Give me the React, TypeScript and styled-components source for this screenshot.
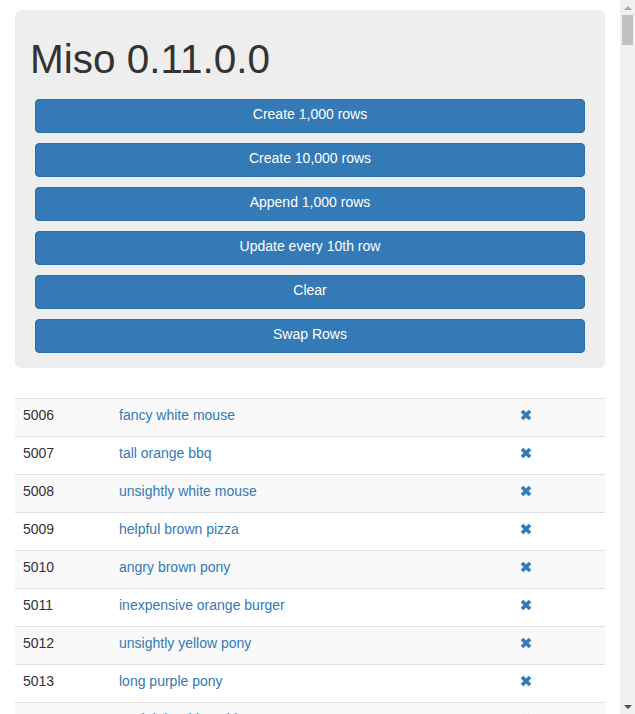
import React from "react";
import styled, { createGlobalStyle } from "styled-components";

const GlobalStyle = createGlobalStyle`
  html, body { margin: 0; padding: 0; background: #fff; }
  body {
    font-family: "Liberation Sans", Arial, Helvetica, sans-serif;
    font-size: 14px;
    line-height: 20px;
    color: #333;
    overflow: hidden;
  }
  * { box-sizing: border-box; }
`;

const Viewport = styled.div`
  display: flex;
  height: 714px;
  overflow: hidden;
`;

const Page = styled.div`
  flex: 1;
  min-width: 0;
  overflow: hidden;
  padding: 10px 15px 0;
`;

const Scrollbar = styled.div`
  width: 15px;
  flex: none;
  display: flex;
  flex-direction: column;
  background: #f1f1f1;
`;

const ArrowBox = styled.div`
  height: 15px;
  flex: none;
  display: flex;
  align-items: center;
  justify-content: center;
`;

const Arrow = styled.div<{ $down?: boolean; $color: string }>`
  width: 0;
  height: 0;
  border-left: 4px solid transparent;
  border-right: 4px solid transparent;
  ${(p) =>
    p.$down
      ? `border-top: 4px solid ${p.$color};`
      : `border-bottom: 4px solid ${p.$color};`}
`;

const Track = styled.div`
  flex: 1;
  padding: 0 2px;
`;

const Thumb = styled.div`
  height: 30px;
  background: #c1c1c1;
`;

const Jumbotron = styled.div`
  background: #eeeeee;
  border-radius: 6px;
  padding: 27px 15px 10px;
  margin-bottom: 30px;
`;

const Title = styled.h1`
  margin: 0 0 13px;
  font-size: 40.5px;
  line-height: 44px;
  font-weight: 400;
  color: #333;
`;

const ButtonList = styled.div`
  display: flex;
  flex-direction: column;
`;

const ButtonCell = styled.div`
  padding: 5px;
`;

const Button = styled.button`
  display: block;
  width: 100%;
  height: 34px;
  padding: 4px 12px 8px;
  font-family: inherit;
  font-size: 14px;
  line-height: 20px;
  color: #fff;
  background: #337ab7;
  border: 1px solid #2e6da4;
  border-radius: 4px;
  cursor: pointer;
`;

const Table = styled.table`
  width: 100%;
  border-collapse: collapse;
  table-layout: fixed;
`;

const Row = styled.tr<{ $striped: boolean }>`
  background: ${(p) => (p.$striped ? "#f9f9f9" : "#fff")};
`;

const Cell = styled.td`
  padding: 6px 8px 11px;
  line-height: 20px;
  border-top: 1px solid #ddd;
  vertical-align: top;
`;

const IconCell = styled(Cell)`
  padding-top: 10px;
  padding-bottom: 7px;
`;

const Label = styled.a`
  color: #337ab7;
  text-decoration: none;
`;

const RemoveIcon = styled.svg`
  display: block;
  width: 12px;
  height: 12px;
  margin-left: 1px;
`;

const buttons = [
  "Create 1,000 rows",
  "Create 10,000 rows",
  "Append 1,000 rows",
  "Update every 10th row",
  "Clear",
  "Swap Rows",
];

const rows = [
  { id: 5006, label: "fancy white mouse" },
  { id: 5007, label: "tall orange bbq" },
  { id: 5008, label: "unsightly white mouse" },
  { id: 5009, label: "helpful brown pizza" },
  { id: 5010, label: "angry brown pony" },
  { id: 5011, label: "inexpensive orange burger" },
  { id: 5012, label: "unsightly yellow pony" },
  { id: 5013, label: "long purple pony" },
  { id: 5014, label: "unsightly white table" },
];

const Remove = () => (
  <RemoveIcon viewBox="0 0 12 12">
    <path d="M2 2 L10 10 M10 2 L2 10" stroke="#337ab7" strokeWidth="3.6" fill="none" />
  </RemoveIcon>
);

export default function App() {
  return (
    <>
      <GlobalStyle />
      <Viewport>
        <Page>
          <Jumbotron>
            <Title>Miso 0.11.0.0</Title>
            <ButtonList>
              {buttons.map((b) => (
                <ButtonCell key={b}>
                  <Button type="button">{b}</Button>
                </ButtonCell>
              ))}
            </ButtonList>
          </Jumbotron>
          <Table>
            <colgroup>
              <col style={{ width: 96 }} />
              <col style={{ width: 400 }} />
              <col style={{ width: 60 }} />
              <col />
            </colgroup>
            <tbody>
              {rows.map((r, i) => (
                <Row key={r.id} $striped={i % 2 === 0}>
                  <Cell>{r.id}</Cell>
                  <Cell>
                    <Label href="#">{r.label}</Label>
                  </Cell>
                  <IconCell>
                    <Remove />
                  </IconCell>
                  <Cell />
                </Row>
              ))}
            </tbody>
          </Table>
        </Page>
        <Scrollbar>
          <ArrowBox>
            <Arrow $color="#a3a3a3" />
          </ArrowBox>
          <Track>
            <Thumb />
          </Track>
          <ArrowBox>
            <Arrow $down $color="#505050" />
          </ArrowBox>
        </Scrollbar>
      </Viewport>
    </>
  );
}
